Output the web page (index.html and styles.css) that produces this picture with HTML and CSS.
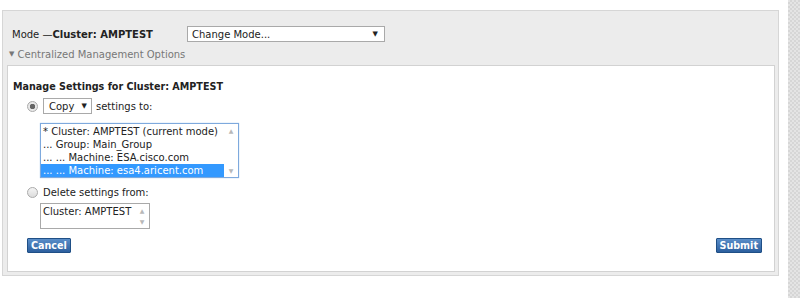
FILE: index.html
```html
<!DOCTYPE html>
<html lang="en">
<head>
  <meta charset="UTF-8" />
  <title>Centralized Management</title>
  <link rel="stylesheet" href="styles.css">
</head>
<body>
  <div class="page">
    <div class="panel">
      <div class="mode-row">
        <span class="mode-label">Mode &mdash;<b>Cluster: AMPTEST</b></span>
        <div class="select mode-select">
          <span>Change Mode...</span>
          <span class="arrow">&#9660;</span>
        </div>
      </div>
      <div class="options-toggle"><span class="tri">&#9660;</span> Centralized Management Options</div>

      <div class="box">
        <h3>Manage Settings for Cluster: AMPTEST</h3>

        <div class="choice">
          <span class="radio checked"></span>
          <div class="select copy-select">
            <span>Copy</span>
            <span class="arrow">&#9660;</span>
          </div>
          <span>settings to:</span>
        </div>
        <div class="listbox big">
          <ul>
            <li>* Cluster: AMPTEST (current mode)</li>
            <li>... Group: Main_Group</li>
            <li>... ... Machine: ESA.cisco.com</li>
            <li class="sel">... ... Machine: esa4.aricent.com</li>
          </ul>
          <div class="scroll"><span>&#9650;</span><span>&#9660;</span></div>
        </div>

        <div class="choice del">
          <span class="radio"></span>
          <span>Delete settings from:</span>
        </div>
        <div class="listbox small">
          <ul>
            <li>Cluster: AMPTEST</li>
          </ul>
          <div class="scroll"><span>&#9650;</span><span>&#9660;</span></div>
        </div>

        <div class="buttons">
          <button>Cancel</button>
          <button>Submit</button>
        </div>
      </div>
    </div>
    <div class="side"></div>
  </div>
</body>
</html>
```

FILE: styles.css
```css
* {
  box-sizing: border-box;
  margin: 0;
  padding: 0;
}

body {
  font-family: "DejaVu Sans", Verdana, sans-serif;
  font-size: 10px;
  color: #222;
  background: #fff;
}

.page {
  display: flex;
  align-items: flex-start;
  height: 298px;
}

.panel {
  width: 777px;
  margin: 10px 0 0 2px;
  background: #ececec;
  border: 1px solid #d6d6d6;
  padding: 0 3px 3px 4px;
}

.side {
  width: 12px;
  height: 298px;
  margin-left: 9px;
  background-color: #e4e4e4;
  background-image:
    linear-gradient(45deg, #d6d6d6 25%, transparent 25%, transparent 75%, #d6d6d6 75%),
    linear-gradient(45deg, #d6d6d6 25%, transparent 25%, transparent 75%, #d6d6d6 75%);
  background-size: 4px 4px;
  background-position: 0 0, 2px 2px;
}

.mode-row {
  display: flex;
  align-items: center;
  height: 38px;
  padding: 8px 0 0 5px;
}

.mode-label {
  width: 175px;
  font-size: 10px;
}

.mode-label b {
  font-weight: bold;
}

.select {
  display: flex;
  justify-content: space-between;
  align-items: center;
  background: #fff;
  border: 1px solid #a9a9a9;
  font-size: 10px;
  padding: 0 6px 0 4px;
}

.select .arrow {
  font-size: 7px;
}

.mode-select {
  width: 198px;
  height: 16px;
}

.options-toggle {
  color: #777;
  font-size: 10px;
  height: 16px;
  padding-left: 2px;
}

.tri {
  font-size: 7px;
  vertical-align: 2px;
}

.box {
  background: #fff;
  border: 1px solid #d2d2d2;
  height: 207px;
  padding: 15px 12px 0 5px;
  display: flex;
  flex-direction: column;
}

.box h3 {
  font-size: 9.6px;
  font-weight: bold;
  margin-bottom: 6px;
}

.choice {
  display: flex;
  align-items: center;
  gap: 4px;
  padding-left: 14px;
  font-size: 10px;
}

.radio {
  width: 11px;
  height: 11px;
  border-radius: 50%;
  border: 1px solid #aaa;
  background: linear-gradient(#f4f4f4, #dcdcdc);
  margin-right: 1px;
}

.radio.checked {
  background: radial-gradient(circle, #666 0 2.5px, #e8e8e8 3px);
}

.copy-select {
  width: 49px;
  height: 16px;
  padding: 0 4px 0 5px;
}

.listbox {
  display: flex;
  margin: 9px 0 0 27px;
  border: 1px solid #a9a9a9;
  background: #fff;
  font-size: 10px;
  line-height: 13px;
}

.listbox.big {
  width: 199px;
  height: 55px;
  border-color: #7ea9dd;
  box-shadow: 0 0 1px #9cc0ea;
}

.listbox.small {
  width: 110px;
  height: 26px;
  margin-top: 5px;
}

.listbox ul {
  list-style: none;
  flex: 1;
  padding-top: 1px;
}

.listbox li {
  padding-left: 2px;
  white-space: nowrap;
}

.listbox li.sel {
  background: #3399ff;
  color: #fff;
}

.scroll {
  width: 14px;
  display: flex;
  flex-direction: column;
  justify-content: space-between;
  align-items: center;
  color: #b8b8b8;
  font-size: 6px;
  line-height: 8px;
  padding: 3px 0 2px;
}

.choice.del {
  margin-top: 9px;
}

.buttons {
  display: flex;
  justify-content: space-between;
  margin-top: 9px;
  padding-left: 14px;
}

button {
  font-family: "DejaVu Sans", Verdana, sans-serif;
  font-size: 9.6px;
  font-weight: bold;
  color: #fff;
  height: 15px;
  padding: 0 3px;
  background: linear-gradient(#5a8ec9, #2c5f9e);
  border: 1px solid #1f4f86;
  border-radius: 1px;
}
```
